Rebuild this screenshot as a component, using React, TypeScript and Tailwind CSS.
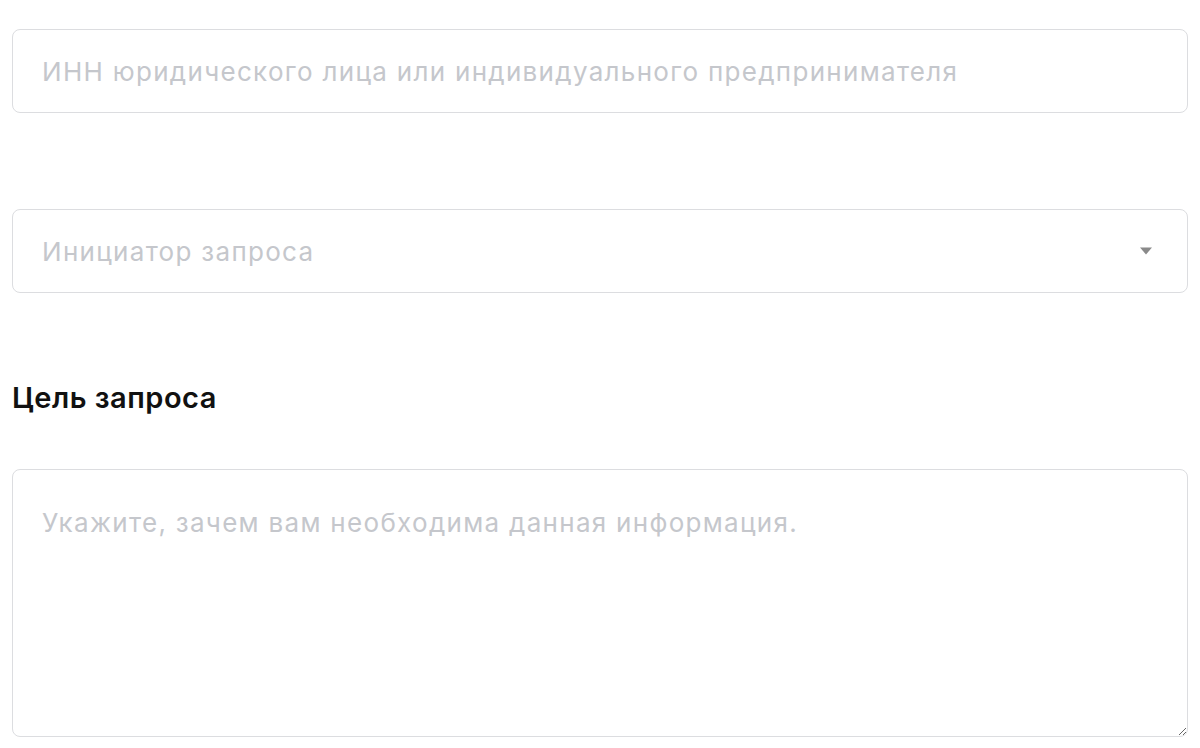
import React from "react";

export default function App() {
  return (
    <div className="w-[1200px] h-[748px] bg-white px-[12px] pt-[29px] overflow-hidden" style={{ fontFamily: "Inter, 'Noto Sans', sans-serif" }}>
      <input
        className="block w-full h-[84px] rounded-[8px] border border-[#dcdde0] px-[29px] text-[26px] tracking-[1.3px] text-[#1f1f1f] placeholder:text-[#c5c7cc] outline-none"
        placeholder="ИНН юридического лица или индивидуального предпринимателя"
      />
      <div className="mt-[96px] relative h-[84px] rounded-[8px] border border-[#dcdde0] flex items-center px-[29px]">
        <span className="text-[26px] tracking-[1.3px] text-[#c5c7cc]">Инициатор запроса</span>
        <svg className="absolute right-[34px] top-1/2 -translate-y-1/2" width="14" height="9" viewBox="0 0 14 9">
          <path d="M1 1 L13 1 L7 8 Z" fill="#8a8a8a" />
        </svg>
      </div>
      <h2 className="mt-[88px] text-[29px] tracking-[0.5px] font-semibold text-[#111111] leading-[34px]">Цель запроса</h2>
      <textarea
        className="block mt-[54px] w-full h-[268px] rounded-[8px] border border-[#dcdde0] px-[29px] pt-[33px] text-[26px] tracking-[1.3px] placeholder:text-[#c5c7cc] outline-none"
        placeholder="Укажите, зачем вам необходима данная информация."
      />
    </div>
  );
}
